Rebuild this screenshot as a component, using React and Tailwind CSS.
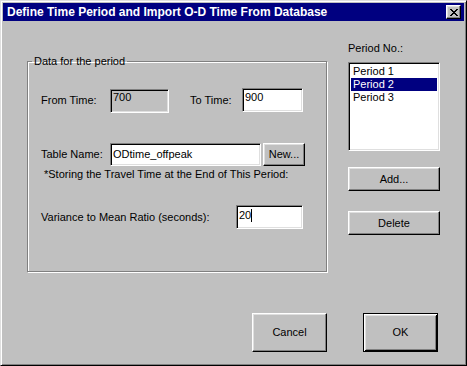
import React from "react";

const raised =
  "border border-t-white border-l-white border-r-black border-b-black shadow-[inset_-1px_-1px_0_#808080,inset_1px_1px_0_#dfdfdf] bg-[#c0c0c0] flex items-center justify-center";
const sunken =
  "border border-t-[#808080] border-l-[#808080] border-b-white border-r-white shadow-[inset_1px_1px_0_#000,inset_-1px_-1px_0_#dfdfdf]";

function CloseGlyph() {
  const px = [
    [0, 0], [1, 0], [6, 0], [7, 0],
    [1, 1], [2, 1], [5, 1], [6, 1],
    [2, 2], [3, 2], [4, 2], [5, 2],
    [3, 3], [4, 3],
    [2, 4], [3, 4], [4, 4], [5, 4],
    [1, 5], [2, 5], [5, 5], [6, 5],
    [0, 6], [1, 6], [6, 6], [7, 6],
  ];
  return (
    <svg width="8" height="7" viewBox="0 0 8 7" shapeRendering="crispEdges">
      {px.map(([x, y], i) => (
        <rect key={i} x={x} y={y} width="1" height="1" fill="#000" />
      ))}
    </svg>
  );
}

export default function App() {
  return (
    <div className="w-[467px] h-[366px] bg-[#c0c0c0] border border-t-[#dfdfdf] border-l-[#dfdfdf] border-r-black border-b-black shadow-[inset_1px_1px_0_#fff,inset_-1px_-1px_0_#808080] flex flex-col font-['Liberation_Sans',Arial,sans-serif] text-[11px] leading-[13px] text-black overflow-hidden">
      {/* Title bar */}
      <div className="mx-[2px] mt-[2px] h-[18px] bg-[#000080] flex items-center justify-between pl-[4px] pr-[3px] shrink-0">
        <span className="text-white font-bold text-[12px] leading-[14px] whitespace-nowrap">
          Define Time Period and Import O-D Time From Database
        </span>
        <div className={`${raised} w-[15px] h-[14px]`}>
          <CloseGlyph />
        </div>
      </div>

      {/* Body */}
      <div className="flex items-start pl-[26px]">
        <fieldset className="mt-[34px] w-[300px] h-[217px] border border-[#808080] shadow-[1px_1px_0_#fff,inset_1px_1px_0_#fff] min-w-0">
          <legend className="ml-[4px] px-[2px] leading-[13px]">Data for the period</legend>

          <div className="pl-[13px]">
            <div className="mt-[20px] flex items-center h-[25px]">
              <span className="w-[69px]">From Time:</span>
              <div className={`${sunken} w-[59px] h-[24px] self-end bg-[#c0c0c0] pl-[2px] pt-[1px]`}>700</div>
              <span className="ml-[21px] w-[52px]">To Time:</span>
              <div className={`${sunken} w-[61px] h-[24px] self-start bg-white pl-[2px] pt-[2px]`}>900</div>
            </div>

            <div className="mt-[30px] flex items-center h-[23px]">
              <span className="w-[69px]">Table Name:</span>
              <div className={`${sunken} w-[151px] h-[23px] bg-white pl-[2px] flex items-center`}>ODtime_offpeak</div>
              <button className={`${raised} ml-[2px] w-[42px] h-[23px]`}>New...</button>
            </div>

            <div className="mt-[2px] pl-[3px] whitespace-nowrap">
              *Storing the Travel Time at the End of This Period:
            </div>

            <div className="mt-[24px] flex items-center h-[24px]">
              <span className="w-[195px] whitespace-nowrap">Variance to Mean Ratio (seconds):</span>
              <div className={`${sunken} w-[67px] h-[24px] bg-white pl-[2px] pt-[3px] flex items-start`}>
                <span>20</span>
                <span className="inline-block w-[1px] h-[13px] bg-black" />
              </div>
            </div>
          </div>
        </fieldset>

        <div className="ml-[21px] mt-[21px] w-[92px] flex flex-col">
          <span className="leading-[13px]">Period No.:</span>
          <div className={`${sunken} mt-[7px] h-[89px] bg-white p-[2px] flex flex-col`}>
            <div className="pl-[2px] h-[13px]">Period 1</div>
            <div className="pl-[2px] h-[13px] bg-[#000080] text-white">Period 2</div>
            <div className="pl-[2px] h-[13px]">Period 3</div>
          </div>
          <button className={`${raised} mt-[16px] h-[24px]`}>Add...</button>
          <button className={`${raised} mt-[20px] h-[24px]`}>Delete</button>
        </div>
      </div>

      {/* Bottom buttons */}
      <div className="mt-auto mb-[13px] flex justify-end gap-[36px] pr-[28px]">
        <button className={`${raised} w-[75px] h-[39px]`}>Cancel</button>
        <button className="w-[75px] h-[39px] bg-[#c0c0c0] border border-black shadow-[inset_1px_1px_0_#fff,inset_-1px_-1px_0_#000,inset_2px_2px_0_#dfdfdf,inset_-2px_-2px_0_#808080] flex items-center justify-center">
          OK
        </button>
      </div>
    </div>
  );
}
